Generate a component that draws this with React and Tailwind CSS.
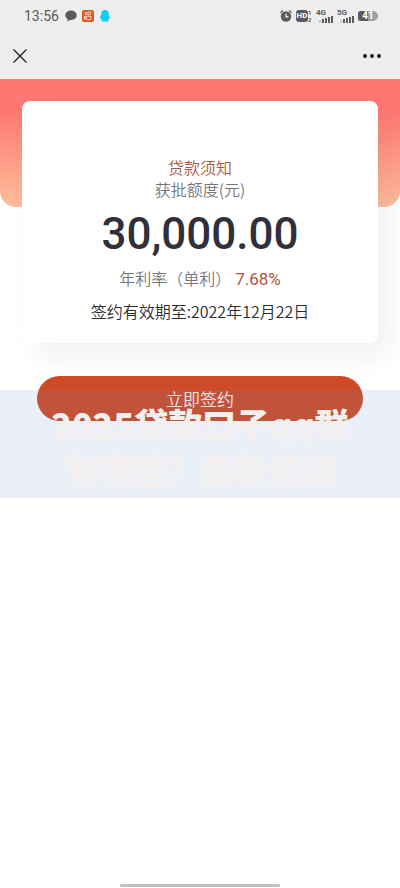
import React from 'react';

const signalBars = [3, 4, 5, 6, 7];

const Signal = ({ label }) => (
  <div className="w-[17px] h-[13px] flex flex-col">
    <span className="text-[8px] leading-[6px] font-bold">{label}</span>
    <svg viewBox="0 0 17 7" className="w-[17px] h-[7px]" fill="currentColor">
      {signalBars.map((h, i) => (
        <rect key={i} x={i * 3 + 3} y={7 - h} width="2" height={h} opacity={i === 0 ? 0.25 : 1} />
      ))}
    </svg>
  </div>
);

const StatusBar = () => (
  <div className="h-8 pl-6 pr-[22px] flex items-center justify-between text-[#5a5a5a]">
    <div className="flex items-center gap-1.5">
      <span className="text-sm font-['Roboto',sans-serif]">13:56</span>
      <div className="flex items-center gap-[5px]">
        {/* Chat bubble */}
        <svg viewBox="0 0 12 12" className="w-3 h-3" fill="currentColor">
          <path d="M6 .5C2.800.5.3 2.600.3 5.300c0 1.600.9 2.900 2.300 3.800L2.400 11.400l2.400-1.500c.4.1.8.1 1.200.1 3.200 0 5.700-2.100 5.700-4.700S9.200.5 6 .5z" />
        </svg>
        {/* Orange video app */}
        <svg viewBox="0 0 12 12" className="w-3 h-3">
          <rect width="12" height="12" rx="2.500" fill="#d95b1f" />
          <g fill="none" stroke="#fbe3d6" strokeWidth="1">
            <circle cx="4.300" cy="3.500" r="1.200" />
            <circle cx="7.500" cy="3.300" r="1.500" />
            <rect x="4.500" y="6.200" width="4.500" height="3.500" rx="1" />
            <path d="M4.500 7.300l-2-1v3l2-1" />
          </g>
        </svg>
        {/* Penguin */}
        <svg viewBox="0 0 12 12" className="w-3 h-3" fill="#12cdf0">
          <path d="M6 0C3.700 0 2.200 1.600 2.200 3.600v1.300C1.500 5.900.9 7 1 8.300c0 .7.500.6 1-.1.200.6.500 1.200 1 1.700-.9.300-.9 1.500.2 1.600h5.600c1.100-.1 1.100-1.300.2-1.600.5-.5.800-1.100 1-1.700.5.700 1 .8 1 .1.100-1.300-.5-2.400-1.200-3.400V3.600C9.800 1.600 8.300 0 6 0z" />
        </svg>
      </div>
    </div>

    <div className="flex items-center gap-1 font-['Roboto',sans-serif]">
      <svg viewBox="0 0 12 12" className="w-3 h-3" fill="currentColor">
        <circle cx="6" cy="6.500" r="5.200" />
        <path d="M.4 2.800L2.900.6M9.100.6l2.500 2.200" stroke="currentColor" strokeWidth="1.300" />
        <path d="M6 3.800v3h2.400" stroke="#fff" strokeWidth="1.200" fill="none" />
      </svg>
      <div className="flex items-center">
        <span className="h-3 w-3 rounded-[3px] bg-[#5a5a5a] text-white text-[8px] leading-3 font-bold text-center">HD</span>
        <span className="flex flex-col text-[6px] leading-[7px] font-bold w-1">
          <span>1</span>
          <span>2</span>
        </span>
      </div>
      <Signal label="4G" />
      <Signal label="5G" />
      <span className="w-5 h-[10px] rounded-[3px] rounded-r-md bg-linear-to-r from-[#5a5a5a] from-50% to-[#a0a0a0] to-50% text-white text-[10px] leading-[10px] font-bold text-center">41</span>
    </div>
  </div>
);

const TitleBar = () => (
  <div className="h-[47px] px-3 flex items-center justify-between text-[#222]">
    <button type="button" aria-label="关闭" className="w-4 h-4">
      <svg viewBox="0 0 16 16" className="w-4 h-4" fill="none" stroke="currentColor" strokeWidth="1.400">
        <path d="M1.500 1.500l13 13M14.500 1.500l-13 13" />
      </svg>
    </button>
    <button type="button" aria-label="更多" className="w-8 h-5 flex justify-center items-center">
      <svg viewBox="0 0 20 4" className="w-5 h-1" fill="#111">
        <circle cx="3" cy="2" r="1.900" />
        <circle cx="10" cy="2" r="1.900" />
        <circle cx="17" cy="2" r="1.900" />
      </svg>
    </button>
  </div>
);

const LoanCard = () => (
  <section className="relative rounded-lg bg-white pt-[55px] pb-5 text-center text-[#77777b] font-[350] shadow-[12px_14px_24px_rgba(40,40,70,0.06)]">
    <a href="#notice" className="block text-base leading-[22px] text-[#a85a40]">贷款须知</a>
    <p className="text-base leading-[22px]">获批额度(元)</p>
    <p className="mt-[10px] mb-2 text-[44px] leading-12 font-medium text-[#302f3a] font-['Roboto',sans-serif]">30,000.00</p>
    <p className="text-base leading-6">
      年利率（单利）
      <span className="ml-1 text-[17px] text-[#b4553c] font-normal font-['Roboto',sans-serif]">7.68%</span>
    </p>
    <p className="mt-2 text-base leading-6 text-[#2c2c2c]">签约有效期至:2022年12月22日</p>
  </section>
);

export default function App() {
  return (
    <div className="relative min-h-screen flex flex-col bg-white overflow-hidden font-['Noto_Sans_CJK_SC',sans-serif]">
      <header className="bg-[#ededed]">
        <StatusBar />
        <TitleBar />
      </header>

      <main className="relative">
        {/* Coral backdrop behind the card */}
        <div className="absolute inset-x-0 top-0 h-32 rounded-b-2xl bg-linear-to-b from-[#ff7773] from-25% to-[#fdbd9b]"></div>
        <div className="px-[22px] pt-[22px]">
          <LoanCard />
        </div>
        <div className="px-[37px] pt-[33px]">
          <button type="button" className="w-full h-[45px] rounded-full bg-[#cf4b27] text-[17px] font-[350] text-[#fff3ec]">
            立即签约
          </button>
        </div>

        {/* Translucent caption banner */}
        <div className="absolute inset-x-0 top-[311px] h-[108px] pt-[11px] bg-[#6488c8]/13 text-center text-[#f3efef] font-black text-[34px] leading-[45px]">
          <h1>
            2025贷款口子qq群
            <br />
            有哪些？最新资源
          </h1>
        </div>
      </main>

      <div className="mt-auto mb-px mx-auto w-2/5 h-[3px] rounded-full bg-[#c0c0c0]"></div>
    </div>
  );
}
